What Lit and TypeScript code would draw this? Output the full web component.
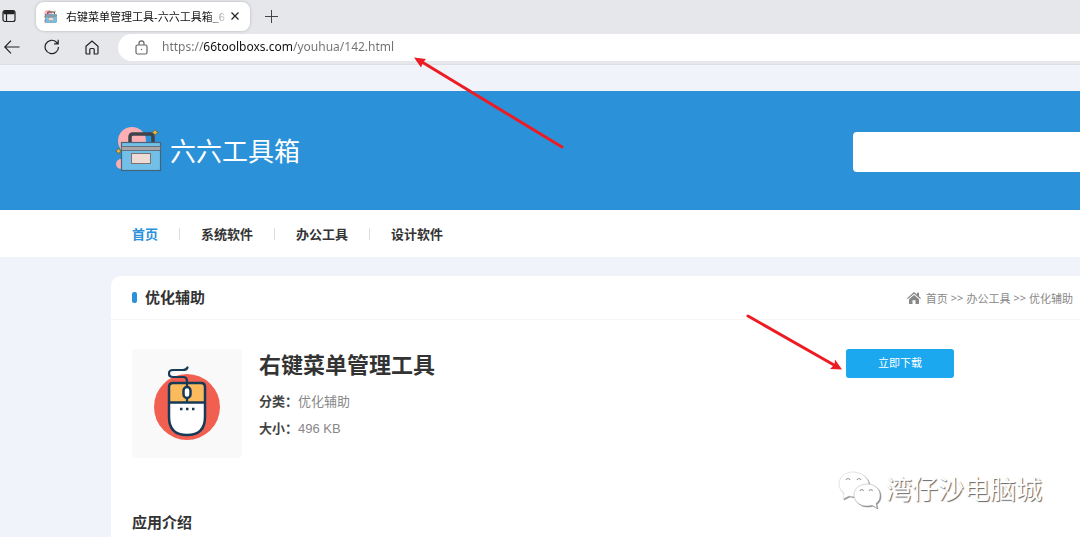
import { LitElement, html, css, svg } from "lit";
import { customElement, state } from "lit/decorators.js";

const toolbox = svg`
  <circle cx="15" cy="14" r="14" fill="#fcaeb3"/>
  <circle cx="4" cy="37" r="5" fill="#fcaeb3"/>
  <circle cx="40" cy="19" r="4" fill="#fcaeb3"/>
  <path d="M13 15V10q0-3 3-3h17q3 0 3 3v5" fill="none" stroke="#3f434c" stroke-width="3.500"/>
  <rect x="4.500" y="15.500" width="39" height="28" fill="#72bfe8" stroke="#47637a" stroke-width="1.200"/>
  <rect x="4.500" y="19.500" width="39" height="4" fill="#a9a4a6" stroke="#59636f" stroke-width=".8"/>
  <rect x="14.500" y="26.500" width="19" height="10" fill="#eedbd6" stroke="#7d7172"/>
  <path d="M38 2.500l1.300 1.900 2 1-2 1L38 8.500l-1.300-2.100-2-1 2-1zM1.500 21l1.100 2.100 1.900 1-1.900 1-1.100 2.100-1.100-2.100-1.900-1 1.900-1z" fill="#f0b93a" stroke="#5c6142" stroke-width=".7"/>`;

@customElement("browser-bar")
export class BrowserBar extends LitElement {
  static styles = css`
    :host { display: block; background: #e6e7eb; border-bottom: 1px solid #dddfe3; }
    button { border: 0; padding: 0; background: none; color: #222; display: grid; place-items: center; cursor: pointer; }
    svg { display: block; fill: none; stroke: currentColor; stroke-width: 1.2; }
    .tabs { display: flex; align-items: center; height: 31px; padding-top: 1px; gap: 14px; box-sizing: border-box; }
    .panes { width: 22px; height: 24px; padding-right: 4px; }
    .tab { display: flex; align-items: center; width: 214px; height: 29px; box-sizing: border-box; padding: 0 8px; background: #fff; border-radius: 8px; box-shadow: 0 0 3px #aeb0b5; }
    .favicon { width: 13px; height: 13px; stroke: none; }
    .title { flex: 1; margin-left: 9px; white-space: nowrap; font-size: 11px; color: #111;
      -webkit-mask-image: linear-gradient(to right, #000 140px, transparent 164px); mask-image: linear-gradient(to right, #000 140px, transparent 164px); }
    .close { width: 14px; height: 20px; }
    .new { width: 14px; height: 24px; color: #444; }
    .tools { display: flex; align-items: center; height: 32px; padding-bottom: 1px; }
    .nav { width: 40px; height: 28px; }
    .back { width: 32px; padding-right: 8px; }
    .address { flex: 1; display: flex; align-items: center; height: 27px; margin-left: 6px; padding-left: 17px; gap: 14px; background: #fff; border-radius: 14px 0 0 14px; color: #666; }
    .url { flex: 1; min-width: 0; height: 24px; border: 0; padding: 0; outline: 0; font: 12px/24px "Noto Sans", sans-serif; color: transparent; caret-color: #222;
      background: linear-gradient(to right, #707070 41px, #111 41px, #111 131px, #707070 131px); -webkit-background-clip: text; background-clip: text; }
  `;
  render() {
    return html`
      <div class="tabs">
        <button class="panes" aria-label="Tab actions"><svg width="14" height="14" viewBox="0 0 14 14"><rect x="1" y="1.500" width="12" height="11" rx="2"/><path d="M1.500 3.500h11" stroke-width="3.500"/><path d="M4.500 4v8"/></svg></button>
        <div class="tab">
          <svg class="favicon" viewBox="0 0 45 45">${toolbox}</svg>
          <span class="title">右键菜单管理工具-六六工具箱_6</span>
          <button class="close" aria-label="Close tab"><svg width="8" height="8" viewBox="0 0 8 8"><path d="M.5.5l7 7M7.500.5l-7 7"/></svg></button>
        </div>
        <button class="new" aria-label="New tab"><svg width="13" height="13" viewBox="0 0 13 13"><path d="M6.500 0v13M0 6.500h13" stroke-width="1"/></svg></button>
      </div>
      <div class="tools">
        <button class="nav back" aria-label="Back"><svg width="16" height="14" viewBox="0 0 16 14"><path d="M15.500 7H1M7 .7L.8 7 7 13.300"/></svg></button>
        <button class="nav" aria-label="Refresh"><svg width="16" height="16" viewBox="0 0 16 16"><path d="M14.500 8a6.700 6.700 0 1 1-2-4.800L14 4.700M14.200.8v4.100h-4.100"/></svg></button>
        <button class="nav" aria-label="Home"><svg width="14" height="15" viewBox="0 0 14 15"><path d="M1 6.200L7 1l6 5.200V13q0 1-1 1H9.200V9.500q0-1-1-1H5.800q-1 0-1 1V14H2q-1 0-1-1z"/></svg></button>
        <label class="address">
          <svg width="13" height="15" viewBox="0 0 13 15"><rect x="1" y="5" width="11" height="9" rx="1.500"/><path d="M4 5V3.300a2.500 2.500 0 0 1 5 0V5"/><circle cx="6.500" cy="9.500" r=".7" fill="currentColor" stroke="none"/></svg>
          <input class="url" aria-label="Address" value="https://66toolboxs.com/youhua/142.html">
        </label>
      </div>`;
  }
}

@customElement("app-root")
export class AppRoot extends LitElement {
  @state() private links = ["首页", "系统软件", "办公工具", "设计软件"];

  static styles = css`
    :host { display: block; position: relative; min-height: 100vh; overflow: hidden; background: #f0f3f9; color: #333;
      font-family: "Liberation Sans", "Noto Sans CJK SC", sans-serif; }
    a { color: inherit; text-decoration: none; }
    h1, h2, h3, dl, dd, dt { margin: 0; }
    .banner { display: flex; align-items: center; justify-content: space-between; height: 119px; box-sizing: border-box; margin-top: 26px; padding: 2px 0 0 117px; background: #2b91d8; }
    .brand { display: flex; align-items: flex-start; gap: 7px; color: #fff; font-size: 26px; line-height: 44px; }
    .logo { width: 46px; height: 45px; display: block; overflow: visible; margin-top: -3px; }
    .search { width: 227px; height: 40px; box-sizing: border-box; border: 0; padding: 0 12px; border-radius: 4px 0 0 4px; background: #fff; outline: 0; }
    .menu { display: flex; align-items: center; height: 47px; padding-left: 132px; background: #fff; font-size: 13px; font-weight: 700; }
    .menu a + a::before { content: ""; display: inline-block; width: 1px; height: 12px; margin: 0 21px; background: #ddd; vertical-align: -1px; }
    .menu .active { color: #2b91d8; }
    .card { margin: 19px 0 0 111px; background: #fff; border-radius: 10px 0 0 0; }
    .head { display: flex; align-items: center; height: 43px; padding: 0 7px 0 21px; border-bottom: 1px solid #f4f4f7; }
    .head h2, .intro { font-size: 15px; line-height: 24px; }
    .head h2 { display: flex; align-items: center; gap: 8px; }
    .head h2::before { content: ""; width: 5px; height: 11px; border-radius: 2px; background: #2b91d8; }
    .crumbs { display: flex; align-items: center; gap: 3px; margin-left: auto; font-size: 11px; color: #888; }
    .crumbs svg { margin-right: 2px; }
    .crumbs span { font-family: "Noto Sans", sans-serif; }
    .app { display: flex; align-items: flex-start; padding: 29px 126px 0 21px; }
    .thumb { display: block; width: 110px; height: 109px; border-radius: 4px; background: #f9f9f9; }
    .info { margin-left: 17px; padding-top: 1px; }
    .info h1 { font-size: 22px; line-height: 32px; }
    .info dl { margin-top: 6px; font-size: 13px; line-height: 27px; }
    .row { display: flex; }
    .row dt { font-weight: 700; color: #444; }
    .row dd { color: #888; }
    .download { margin-left: auto; width: 108px; height: 29px; border: 0; padding: 0 0 3px; border-radius: 3px; background: #1ba8ef; color: #fff; font: inherit; font-size: 11px; cursor: pointer; }
    .intro { padding: 53px 21px 14px; }
    .arrows { position: absolute; left: 0; top: 0; pointer-events: none; }
    .mark { position: absolute; left: 838px; top: 469px; display: flex; align-items: center; gap: 5px; color: #fff; font-size: 26px; line-height: 42px; text-shadow: 1px 1px 1px #666; white-space: nowrap; pointer-events: none; }
    .mark svg { filter: drop-shadow(1px 1px 0.5px #888); overflow: visible; }
  `;

  render() {
    return html`
      <browser-bar></browser-bar>
      <header class="banner">
        <a class="brand" href="#"><svg class="logo" viewBox="0 0 46 45">${toolbox}</svg>六六工具箱</a>
        <input class="search" type="search" aria-label="搜索">
      </header>
      <nav class="menu">${this.links.map((t, i) => html`<a href="#" class=${i === 0 ? "active" : ""}>${t}</a>`)}</nav>
      <main class="card">
        <div class="head">
          <h2>优化辅助</h2>
          <nav class="crumbs">
            <svg width="14" height="12" viewBox="0 0 14 12" fill="#888"><path d="M7 0l3 2.600V.8h2v3.500L14 6.200l-.8.9L7 1.800.8 7.100 0 6.200z"/><path d="M7 3l5 4.200V12H8.500V8.200h-3V12H2V7.200z"/></svg>
            <a href="#">首页</a><span>&gt;&gt;</span><a href="#">办公工具</a><span>&gt;&gt;</span><a href="#">优化辅助</a>
          </nav>
        </div>
        <section class="app">
          <svg class="thumb" viewBox="0 0 110 109">
            <circle cx="55" cy="58" r="33" fill="#f15f50"/>
            <path d="M37 53V38q0-4 4-4h28q4 0 4 4v15z" fill="#fbbb5c"/>
            <path d="M37 53h36v15q0 18-18 18T37 68z" fill="#fff"/>
            <g fill="none" stroke="#173a57" stroke-width="2.500" stroke-linecap="round" stroke-linejoin="round">
              <path d="M37 38q0-4 4-4h28q4 0 4 4v30q0 18-18 18T37 68zM37 53.500h36"/>
              <path d="M55 53V32q0-4-4-4H41q-4 0-4-3.500t4-3.500h10q3.500 0 4.500-2.500" stroke-width="2.200"/>
              <rect x="51.500" y="38" width="7" height="11" rx="3.500" fill="#fff"/>
            </g>
            <path d="M48 60h2.500M54 60h2.500M60 60h2.500" stroke="#173a57" stroke-width="2.500"/>
          </svg>
          <div class="info">
            <h1>右键菜单管理工具</h1>
            <dl>
              <div class="row"><dt>分类：</dt><dd>优化辅助</dd></div>
              <div class="row"><dt>大小：</dt><dd>496 KB</dd></div>
            </dl>
          </div>
          <button class="download">立即下载</button>
        </section>
        <h3 class="intro">应用介绍</h3>
      </main>
      <svg class="arrows" width="1080" height="537" viewBox="0 0 1080 537" fill="#ed1c24" stroke="#ed1c24" stroke-width="3" stroke-linecap="round">
        <path d="M562 147L422 62M748 316L834 365"/>
        <path d="M414 57.500l12 1.500-3 3.500-2 5zM842 369.500l-7-10-.5 5-4.500 4.500z" stroke="none"/>
      </svg>
      <div class="mark">
        <svg width="43" height="38" viewBox="0 0 43 38" fill="#fff">
          <path d="M15 1C7 1 1 6 1 13c0 4 2 7 5 9.500L5 28l6-3q4 1 7 .5L31 13C30 6 23 1 15 1z" stroke="#ccc" stroke-width=".5"/>
          <path d="M29 13c-8 0-13 5-13 11s5 11 13 11q3 0 5-.8l5 2.800-1-4.500c3-2 4-5 4-8.500 0-6-5-11-13-11z" stroke="#aaa" stroke-width=".5"/>
          <path d="M8 9q2-3 4 0M19 9q2-3 4 0M22 20q2-3 3.500 0M31 20q2-3 3.500 0" fill="none" stroke="#999" stroke-width="1.200"/>
        </svg>
        <span>湾仔沙电脑城</span>
      </div>`;
  }
}
